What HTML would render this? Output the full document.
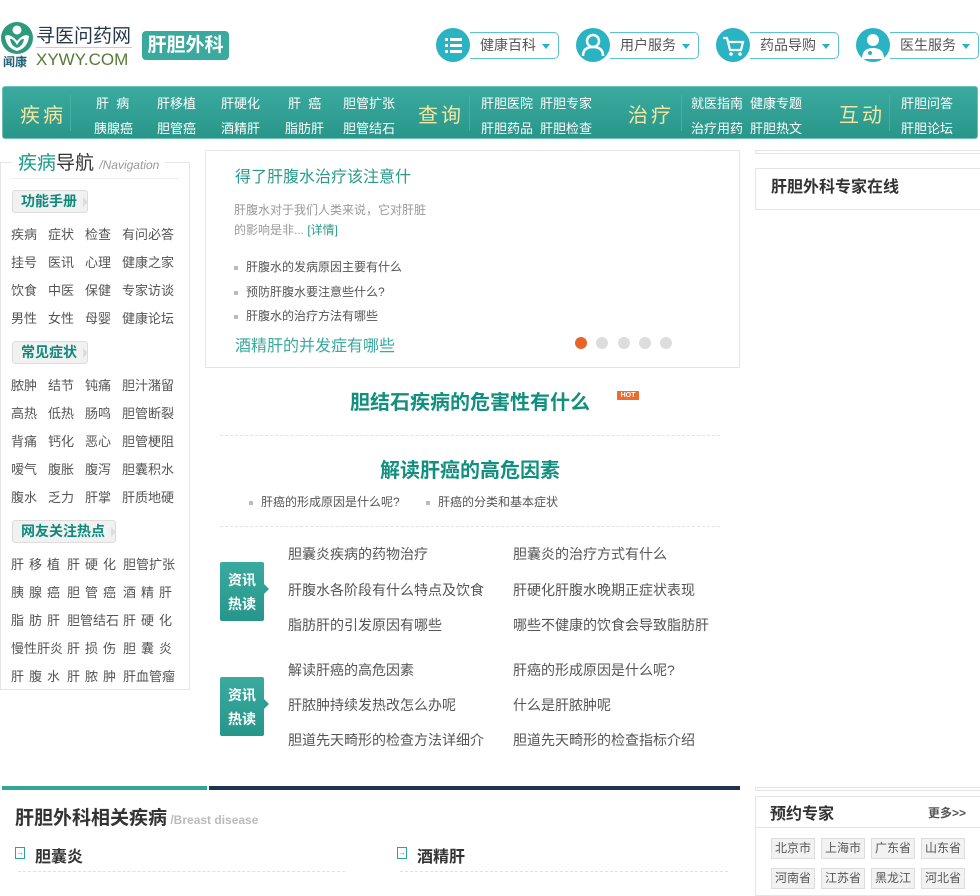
<!DOCTYPE html>
<html><head><meta charset="utf-8"><style>
*{margin:0;padding:0;box-sizing:border-box}
body{width:980px;height:891px;overflow:hidden;background:#fff;position:relative;font-family:"Liberation Sans","Noto Sans CJK SC","WenQuanYi Zen Hei",sans-serif;color:#555}
.a{position:absolute;white-space:nowrap}
.btn{position:absolute;top:32px;height:27px;border:1px solid #5cc3cf;border-left:none;border-radius:0 5px 5px 0;font-size:14px;color:#555;line-height:25px;padding-left:10px}
.btn:after{content:"";position:absolute;right:8px;top:11px;border:4px solid transparent;border-top:5px solid #2ab3c3}
.circ{position:absolute;top:28px;width:34px;height:34px;border-radius:50%;background:#2ab3c3}
.nav{position:absolute;left:2px;top:86px;width:976px;height:53px;background:linear-gradient(#3aaa9f,#2a968a);border-radius:3px;border:1px solid #6cc2b8}
.sec{position:absolute;top:12px;font-size:20px;color:#f3e7a0;letter-spacing:3px}
.ni{position:absolute;font-size:13px;color:#fff;white-space:nowrap}
.dv{position:absolute;top:8px;width:1px;height:36px;background:#2a8a80;border-right:1px solid #45b0a5}
.tag{position:absolute;left:12px;height:23px;background:#f1f1f1;border:1px solid #ddd;border-radius:3px;font-size:14px;font-weight:bold;color:#0e8a7a;line-height:21px;padding-left:8px}
.tag:after{content:"";position:absolute;right:-6px;top:6px;border:5px solid transparent;border-left:5px solid #ddd}
.g{position:absolute;font-size:13px;color:#555;white-space:nowrap}
.lab{position:absolute;left:220px;width:44px;height:59px;background:linear-gradient(#3aaa9f,#27968a);border-radius:2px;color:#fff;font-weight:bold;font-size:14px;text-align:center;line-height:24px;padding-top:6px}
.lab:after{content:"";position:absolute;right:-5px;top:22px;border:5px solid transparent;border-left:5px solid #2ca093;border-right:none}
.nw{position:absolute;font-size:14px;color:#555;white-space:nowrap}
.city{position:absolute;width:44px;height:21px;background:#f2f2f2;border:1px solid #ddd;font-size:12px;color:#555;text-align:center;line-height:19px}
.bul{display:inline-block;width:4px;height:4px;background:#bbb;margin-right:8px;vertical-align:middle}
</style></head><body>

<!-- logo -->
<svg class="a" style="left:0;top:21px" width="34" height="34" viewBox="0 0 34 34"><circle cx="17" cy="17" r="16" fill="#2d9a7e"/><circle cx="17" cy="9" r="4.5" fill="#fff"/><path d="M5 15 Q10 12 17 20 Q24 12 29 15 Q28 27 17 30 Q6 27 5 15Z" fill="#fff"/><path d="M10 18 Q13 17 17 24 Q21 17 24 18 Q23 25 17 27 Q11 25 10 18Z" fill="#2d9a7e"/></svg>
<div class="a" style="left:36px;top:21px;font-size:19px;color:#25384a;letter-spacing:0">寻医问药网</div>
<div class="a" style="left:36px;top:47px;width:96px;height:1px;background:#ccc"></div>
<div class="a" style="left:36px;top:50px;font-size:17px;color:#567a36;letter-spacing:0">XYWY.COM</div>
<div class="a" style="left:3px;top:53px;font-size:12px;color:#23607a;font-weight:bold">闻康</div>
<div class="a" style="left:142px;top:31px;width:87px;height:29px;background:#3aa99e;border-radius:4px;color:#fff;font-size:19px;font-weight:bold;text-align:center;line-height:29px">肝胆外科</div>

<!-- top buttons -->
<div class="btn" style="left:470px;width:89px">健康百科</div>
<div class="circ" style="left:436px"><svg width="34" height="34"><g fill="#fff"><rect x="9" y="10" width="3" height="3"/><rect x="9" y="16" width="3" height="3"/><rect x="9" y="22" width="3" height="3"/><rect x="14" y="10" width="12" height="3"/><rect x="14" y="16" width="12" height="3"/><rect x="14" y="22" width="12" height="3"/></g></svg></div>
<div class="btn" style="left:610px;width:89px">用户服务</div>
<div class="circ" style="left:576px"><svg width="34" height="34"><circle cx="17" cy="13" r="6" fill="none" stroke="#fff" stroke-width="2.5"/><path d="M7 28 Q7 19 17 19 Q27 19 27 28" fill="none" stroke="#fff" stroke-width="2.5"/></svg></div>
<div class="btn" style="left:750px;width:89px">药品导购</div>
<div class="circ" style="left:716px"><svg width="34" height="34"><path d="M7 10 H11 L14 22 H25 L27 14 H13" fill="none" stroke="#fff" stroke-width="2.2"/><circle cx="15" cy="26" r="1.8" fill="#fff"/><circle cx="24" cy="26" r="1.8" fill="#fff"/></svg></div>
<div class="btn" style="left:890px;width:89px">医生服务</div>
<div class="circ" style="left:856px"><svg width="34" height="34"><circle cx="17" cy="12" r="6" fill="#fff"/><path d="M6 31 Q6 20 17 20 Q28 20 28 31Z" fill="#fff"/><circle cx="14" cy="25" r="2" fill="#2ab3c3"/></svg></div>

<!-- nav -->
<div class="nav">
<div class="sec" style="left:17px">疾病</div><div class="dv" style="left:67px"></div>
<div class="ni" style="left:93px;top:6px">肝&nbsp;&nbsp;病</div><div class="ni" style="left:91px;top:31px">胰腺癌</div>
<div class="ni" style="left:154px;top:6px">肝移植</div><div class="ni" style="left:154px;top:31px">胆管癌</div>
<div class="ni" style="left:218px;top:6px">肝硬化</div><div class="ni" style="left:218px;top:31px">酒精肝</div>
<div class="ni" style="left:285px;top:6px">肝&nbsp;&nbsp;癌</div><div class="ni" style="left:282px;top:31px">脂肪肝</div>
<div class="ni" style="left:340px;top:6px">胆管扩张</div><div class="ni" style="left:340px;top:31px">胆管结石</div>
<div class="sec" style="left:415px">查询</div><div class="dv" style="left:466px"></div>
<div class="ni" style="left:478px;top:6px">肝胆医院</div><div class="ni" style="left:478px;top:31px">肝胆药品</div>
<div class="ni" style="left:537px;top:6px">肝胆专家</div><div class="ni" style="left:537px;top:31px">肝胆检查</div>
<div class="sec" style="left:625px">治疗</div><div class="dv" style="left:678px"></div>
<div class="ni" style="left:688px;top:6px">就医指南</div><div class="ni" style="left:688px;top:31px">治疗用药</div>
<div class="ni" style="left:747px;top:6px">健康专题</div><div class="ni" style="left:747px;top:31px">肝胆热文</div>
<div class="sec" style="left:836px">互动</div><div class="dv" style="left:886px"></div>
<div class="ni" style="left:898px;top:6px">肝胆问答</div><div class="ni" style="left:898px;top:31px">肝胆论坛</div>
</div>

<!-- left sidebar -->
<div class="a" style="left:0;top:162px;width:190px;height:528px;border:1px solid #e5e5e5"></div>
<div class="a" style="left:12px;top:148px;height:28px;background:#fff;padding:0 6px;font-size:19px;color:#333"><span style="color:#1a9a8a">疾病</span>导航 <span style="font-size:12px;color:#999;font-style:italic">/Navigation</span></div>
<div class="a" style="left:10px;top:178px;width:169px;height:1px;background:#eee"></div>

<div class="tag" style="top:190px;width:76px">功能手册</div>
<div class="g" style="left:11px;top:224px">疾病</div><div class="g" style="left:48px;top:224px">症状</div><div class="g" style="left:85px;top:224px">检查</div><div class="g" style="left:122px;top:224px">有问必答</div>
<div class="g" style="left:11px;top:252px">挂号</div><div class="g" style="left:48px;top:252px">医讯</div><div class="g" style="left:85px;top:252px">心理</div><div class="g" style="left:122px;top:252px">健康之家</div>
<div class="g" style="left:11px;top:280px">饮食</div><div class="g" style="left:48px;top:280px">中医</div><div class="g" style="left:85px;top:280px">保健</div><div class="g" style="left:122px;top:280px">专家访谈</div>
<div class="g" style="left:11px;top:308px">男性</div><div class="g" style="left:48px;top:308px">女性</div><div class="g" style="left:85px;top:308px">母婴</div><div class="g" style="left:122px;top:308px">健康论坛</div>

<div class="tag" style="top:341px;width:76px">常见症状</div>
<div class="g" style="left:11px;top:375px">脓肿</div><div class="g" style="left:48px;top:375px">结节</div><div class="g" style="left:85px;top:375px">钝痛</div><div class="g" style="left:122px;top:375px">胆汁潴留</div>
<div class="g" style="left:11px;top:403px">高热</div><div class="g" style="left:48px;top:403px">低热</div><div class="g" style="left:85px;top:403px">肠鸣</div><div class="g" style="left:122px;top:403px">胆管断裂</div>
<div class="g" style="left:11px;top:431px">背痛</div><div class="g" style="left:48px;top:431px">钙化</div><div class="g" style="left:85px;top:431px">恶心</div><div class="g" style="left:122px;top:431px">胆管梗阻</div>
<div class="g" style="left:11px;top:459px">嗳气</div><div class="g" style="left:48px;top:459px">腹胀</div><div class="g" style="left:85px;top:459px">腹泻</div><div class="g" style="left:122px;top:459px">胆囊积水</div>
<div class="g" style="left:11px;top:487px">腹水</div><div class="g" style="left:48px;top:487px">乏力</div><div class="g" style="left:85px;top:487px">肝掌</div><div class="g" style="left:122px;top:487px">肝质地硬</div>

<div class="tag" style="top:520px;width:104px">网友关注热点</div>
<div class="g" style="left:11px;top:554px;letter-spacing:5px">肝移植</div><div class="g" style="left:67px;top:554px;letter-spacing:5px">肝硬化</div><div class="g" style="left:123px;top:554px">胆管扩张</div>
<div class="g" style="left:11px;top:582px;letter-spacing:5px">胰腺癌</div><div class="g" style="left:67px;top:582px;letter-spacing:5px">胆管癌</div><div class="g" style="left:123px;top:582px;letter-spacing:5px">酒精肝</div>
<div class="g" style="left:11px;top:610px;letter-spacing:5px">脂肪肝</div><div class="g" style="left:67px;top:610px">胆管结石</div><div class="g" style="left:123px;top:610px;letter-spacing:5px">肝硬化</div>
<div class="g" style="left:11px;top:638px">慢性肝炎</div><div class="g" style="left:67px;top:638px;letter-spacing:5px">肝损伤</div><div class="g" style="left:123px;top:638px;letter-spacing:5px">胆囊炎</div>
<div class="g" style="left:11px;top:666px;letter-spacing:5px">肝腹水</div><div class="g" style="left:67px;top:666px;letter-spacing:5px">肝脓肿</div><div class="g" style="left:123px;top:666px">肝血管瘤</div>

<!-- slider -->
<div class="a" style="left:205px;top:150px;width:535px;height:218px;border:1px solid #e5e5e5"></div>
<div class="a" style="left:235px;top:163px;font-size:16px;color:#2a9a8a">得了肝腹水治疗该注意什</div>
<div class="a" style="left:234px;top:200px;font-size:12px;color:#999;line-height:20px">肝腹水对于我们人类来说，它对肝脏<br>的影响是非... <span style="color:#2a9a8a">[详情]</span></div>
<div class="a" style="left:234px;top:258px;font-size:12px;color:#555"><span class="bul"></span>肝腹水的发病原因主要有什么</div>
<div class="a" style="left:234px;top:283px;font-size:12px;color:#555"><span class="bul"></span>预防肝腹水要注意些什么?</div>
<div class="a" style="left:234px;top:307px;font-size:12px;color:#555"><span class="bul"></span>肝腹水的治疗方法有哪些</div>
<div class="a" style="left:235px;top:332px;font-size:16px;color:#3aa99e">酒精肝的并发症有哪些</div>
<div class="a" style="left:575px;top:337px;width:12px;height:12px;border-radius:50%;background:#e8632a"></div>
<div class="a" style="left:596px;top:337px;width:12px;height:12px;border-radius:50%;background:#ddd"></div>
<div class="a" style="left:618px;top:337px;width:12px;height:12px;border-radius:50%;background:#ddd"></div>
<div class="a" style="left:639px;top:337px;width:12px;height:12px;border-radius:50%;background:#ddd"></div>
<div class="a" style="left:660px;top:337px;width:12px;height:12px;border-radius:50%;background:#ddd"></div>

<!-- headlines -->
<div class="a" style="left:350px;top:386px;font-size:20px;font-weight:bold;color:#12907f">胆结石疾病的危害性有什么</div>
<div class="a" style="left:617px;top:391px;width:22px;height:9px;background:#ef6a2e;color:#fff;font-size:7px;font-weight:bold;text-align:center;line-height:9px">HOT</div>
<div class="a" style="left:220px;top:435px;width:500px;border-top:1px dashed #e3e3e3"></div>
<div class="a" style="left:380px;top:454px;font-size:20px;font-weight:bold;color:#12907f">解读肝癌的高危因素</div>
<div class="a" style="left:249px;top:493px;font-size:12px;color:#555"><span class="bul"></span>肝癌的形成原因是什么呢?</div>
<div class="a" style="left:426px;top:493px;font-size:12px;color:#555"><span class="bul"></span>肝癌的分类和基本症状</div>
<div class="a" style="left:220px;top:526px;width:500px;border-top:1px dashed #e3e3e3"></div>

<!-- news -->
<div class="lab" style="top:562px">资讯<br>热读</div>
<div class="nw" style="left:288px;top:544px">胆囊炎疾病的药物治疗</div><div class="nw" style="left:513px;top:544px">胆囊炎的治疗方式有什么</div>
<div class="nw" style="left:288px;top:580px">肝腹水各阶段有什么特点及饮食</div><div class="nw" style="left:513px;top:580px">肝硬化肝腹水晚期正症状表现</div>
<div class="nw" style="left:288px;top:615px">脂肪肝的引发原因有哪些</div><div class="nw" style="left:513px;top:615px">哪些不健康的饮食会导致脂肪肝</div>
<div class="lab" style="top:677px">资讯<br>热读</div>
<div class="nw" style="left:288px;top:660px">解读肝癌的高危因素</div><div class="nw" style="left:513px;top:660px">肝癌的形成原因是什么呢?</div>
<div class="nw" style="left:288px;top:695px">肝脓肿持续发热改怎么办呢</div><div class="nw" style="left:513px;top:695px">什么是肝脓肿呢</div>
<div class="nw" style="left:288px;top:730px">胆道先天畸形的检查方法详细介</div><div class="nw" style="left:513px;top:730px">胆道先天畸形的检查指标介绍</div>

<!-- right column -->
<div class="a" style="left:755px;top:150px;width:225px;height:4px;border:1px solid #e5e5e5;border-right:none"></div>
<div class="a" style="left:755px;top:168px;width:225px;height:42px;border:1px solid #e5e5e5;border-right:none;font-size:16px;font-weight:bold;color:#333;line-height:38px;padding-left:15px">肝胆外科专家在线</div>

<!-- bottom -->
<div class="a" style="left:2px;top:786px;width:205px;height:4px;background:#32a597"></div>
<div class="a" style="left:209px;top:786px;width:531px;height:4px;background:#1e3350"></div>
<div class="a" style="left:15px;top:803px;font-size:19px;font-weight:bold;color:#333">肝胆外科相关疾病<span style="font-size:12px;color:#bbb;font-weight:bold"> /Breast disease</span></div>
<div class="a" style="left:15px;top:847px;width:10px;height:12px;border:1px solid #2aa596;font-size:8px;color:#2aa596;line-height:10px;text-align:center">→</div>
<div class="a" style="left:35px;top:843px;font-size:16px;font-weight:bold;color:#333">胆囊炎</div>
<div class="a" style="left:397px;top:847px;width:10px;height:12px;border:1px solid #2aa596;font-size:8px;color:#2aa596;line-height:10px;text-align:center">→</div>
<div class="a" style="left:417px;top:843px;font-size:16px;font-weight:bold;color:#333">酒精肝</div>
<div class="a" style="left:18px;top:871px;width:327px;border-top:1px dashed #e0e0e0"></div>
<div class="a" style="left:400px;top:871px;width:328px;border-top:1px dashed #e0e0e0"></div>

<div class="a" style="left:755px;top:787px;width:225px;height:4px;border:1px solid #e5e5e5;border-right:none"></div>
<div class="a" style="left:755px;top:796px;width:225px;height:100px;border:1px solid #e5e5e5;border-right:none"></div>
<div class="a" style="left:770px;top:800px;font-size:16px;font-weight:bold;color:#333">预约专家</div>
<div class="a" style="left:928px;top:804px;font-size:12px;color:#555;font-weight:bold">更多&gt;&gt;</div>
<div class="a" style="left:756px;top:827px;width:224px;height:1px;background:#e5e5e5"></div>
<div class="city" style="left:771px;top:838px">北京市</div><div class="city" style="left:821px;top:838px">上海市</div><div class="city" style="left:871px;top:838px">广东省</div><div class="city" style="left:921px;top:838px">山东省</div>
<div class="city" style="left:771px;top:868px">河南省</div><div class="city" style="left:821px;top:868px">江苏省</div><div class="city" style="left:871px;top:868px">黑龙江</div><div class="city" style="left:921px;top:868px">河北省</div>
</body></html>
